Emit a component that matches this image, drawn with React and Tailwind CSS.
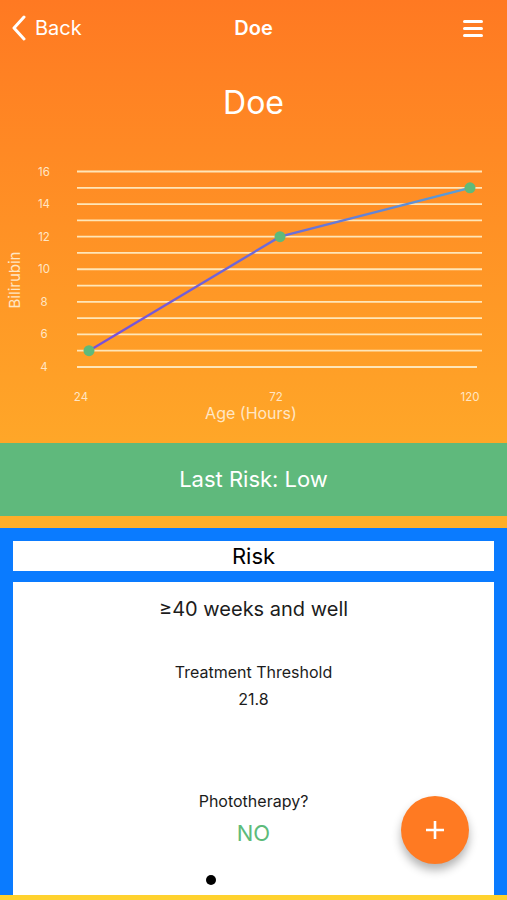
import React from 'react'

const font = { fontFamily: 'Inter, "Liberation Sans", sans-serif' }

const points = [
  { x: 89, y: 200.7 },
  { x: 280, y: 86.7 },
  { x: 470, y: 37.8 },
]

function Chart() {
  const top = 21.5
  const step = 16.29
  const lines = Array.from({ length: 13 }, (_, i) => top + i * step)
  const ticks = [16, 14, 12, 10, 8, 6, 4]
  return (
    <svg width="507" height="280" className="block" style={font}>
      <defs>
        <linearGradient id="ln" x1="0" y1="0" x2="1" y2="0">
          <stop offset="0%" stopColor="#7a4fd8" />
          <stop offset="55%" stopColor="#6a70d8" />
          <stop offset="100%" stopColor="#58a0d6" />
        </linearGradient>
      </defs>
      {lines.map((y, i) => (
        <line key={i} x1="77" x2={i === 12 ? 477 : 482} y1={y} y2={y} stroke="#ffe6b8" strokeWidth="1.8" />
      ))}
      {ticks.map((t, i) => (
        <text key={t} x="44" y={top + i * 2 * step + 4} textAnchor="middle" fontSize="11.5" fill="#ffe6c4">
          {t}
        </text>
      ))}
      <text x="0" y="0" transform="translate(20 130) rotate(-90)" textAnchor="middle" fontSize="15" fill="#ffe6c4">
        Bilirubin
      </text>
      <polyline points={points.map(p => `${p.x},${p.y}`).join(' ')} fill="none" stroke="url(#ln)" strokeWidth="2.4" />
      {points.map((p, i) => (
        <circle key={i} cx={p.x} cy={p.y} r="5.5" fill="#5fba7a" />
      ))}
      <text x="81" y="251" textAnchor="middle" fontSize="11.5" fill="#ffe6c4">24</text>
      <text x="276" y="251" textAnchor="middle" fontSize="11.5" fill="#ffe6c4">72</text>
      <text x="470" y="251" textAnchor="middle" fontSize="11.5" fill="#ffe6c4">120</text>
      <text x="251" y="269" textAnchor="middle" fontSize="16" fill="#ffe6c4">Age (Hours)</text>
    </svg>
  )
}

export default function App() {
  return (
    <div className="w-full min-h-[900px] bg-gradient-to-b from-[#ff7922] to-[#ffd22e] flex flex-col overflow-hidden" style={font}>
      {/* nav */}
      <div className="h-[56px] flex items-center justify-between px-[12px] text-white">
        <div className="flex items-center gap-[9px] w-[100px]">
          <svg width="14" height="26" viewBox="0 0 14 26">
            <path d="M12 2 L2 13 L12 24" fill="none" stroke="white" strokeWidth="3" strokeLinecap="round" strokeLinejoin="round" />
          </svg>
          <span className="text-[20px]">Back</span>
        </div>
        <span className="text-[20px] font-semibold">Doe</span>
        <div className="w-[100px] flex justify-end pr-[12px]">
          <div className="flex flex-col gap-[4px]">
            <div className="w-[20px] h-[3px] bg-white rounded-full" />
            <div className="w-[20px] h-[3px] bg-white rounded-full" />
            <div className="w-[20px] h-[3px] bg-white rounded-full" />
          </div>
        </div>
      </div>

      <div className="h-[94px] flex items-center justify-center text-white text-[32px]">Doe</div>

      <Chart />

      <div className="h-[13px]" />

      <div className="h-[73px] bg-[#5fb97c] flex items-center justify-center text-white text-[22px]">
        Last Risk: Low
      </div>

      <div className="h-[12px]" />

      <div className="h-[367px] bg-[#0a7bff] px-[13px] pt-[13px] flex flex-col gap-[11px]">
        <div className="h-[30px] bg-white flex items-center justify-center text-[22px] text-black">Risk</div>
        <div className="flex-1 bg-white relative flex flex-col items-center text-[#1c1c1c]">
          <div className="mt-[12px] text-[20px]">≥40 weeks and well</div>
          <div className="mt-[36px] text-[16px]">Treatment Threshold</div>
          <div className="mt-[3px] text-[16px]">21.8</div>
          <div className="mt-[78px] text-[16px]">Phototherapy?</div>
          <div className="mt-[4px] text-[22px] text-[#5dbb7a]">NO</div>
          <div className="self-start ml-[193px] mt-[25px] w-[10px] h-[10px] rounded-full bg-black" />
          <div className="absolute left-[388px] top-[214px] w-[68px] h-[68px] rounded-full bg-[#ff7a22] shadow-[0_6px_10px_rgba(0,0,0,0.3)] flex items-center justify-center">
            <svg width="20" height="20" viewBox="0 0 20 20">
              <path d="M10 1 V19 M1 10 H19" stroke="white" strokeWidth="2.6" />
            </svg>
          </div>
        </div>
      </div>
    </div>
  )
}
